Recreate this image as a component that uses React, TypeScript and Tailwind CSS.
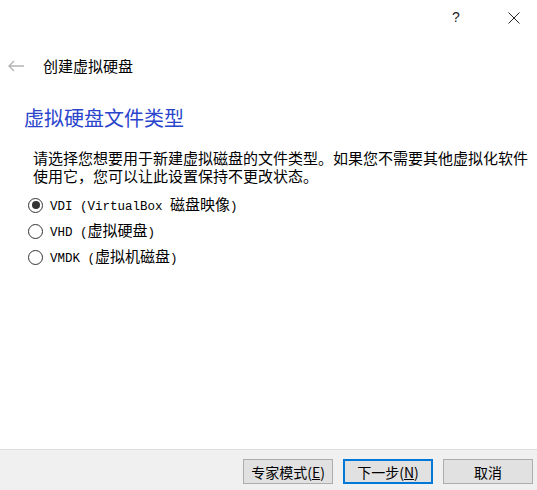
const cjk = { fontFamily: '"Noto Sans CJK SC", "Noto Sans", sans-serif' };

function Radio({ checked, children }: { checked?: boolean; children: React.ReactNode }) {
  return (
    <div className="flex h-[26px] items-center">
      <span className="ml-[28px] flex h-[15px] w-[15px] shrink-0 items-center justify-center rounded-full border border-[#333333] bg-white">
        {checked && <span className="h-[8px] w-[8px] rounded-full bg-[#333333]" />}
      </span>
      <span className="ml-[7px] block text-[15px] leading-[20px] text-black">{children}</span>
    </div>
  );
}

function Latin({ children }: { children: React.ReactNode }) {
  return (
    <span className="whitespace-pre text-[12.5px]" style={{ fontFamily: '"Liberation Mono", monospace' }}>
      {children}
    </span>
  );
}

function Btn({ children, primary }: { children: React.ReactNode; primary?: boolean }) {
  return (
    <button
      className={
        "flex h-[25px] w-[90px] items-center justify-center bg-[#e1e1e1] text-[14px] leading-none text-black " +
        (primary ? "border-2 border-[#0078d7]" : "border border-[#adadad]")
      }
    >
      {children}
    </button>
  );
}

export default function App() {
  return (
    <div className="flex h-[490px] w-full flex-col overflow-hidden bg-white" style={cjk}>
      {/* title bar */}
      <div className="flex h-[35px] items-center justify-end">
        <div className="flex w-[46px] items-center justify-center text-[14px] text-[#222]" style={{ fontFamily: '"Liberation Sans", sans-serif' }}>
          ?
        </div>
        <div className="ml-[12px] flex w-[46px] items-center justify-center">
          <svg width="12" height="12" viewBox="0 0 12 12">
            <path d="M0.5 0.5 L11.5 11.5 M11.5 0.5 L0.5 11.5" stroke="#222" strokeWidth="1" />
          </svg>
        </div>
      </div>

      {/* header */}
      <div className="mt-[19px] flex h-[24px] items-center">
        <svg className="ml-[8px]" width="16" height="12" viewBox="0 0 16 12">
          <path d="M1 6 H16 M6 1 L1 6 L6 11" stroke="#b4b4b4" strokeWidth="1.4" fill="none" />
        </svg>
        <span className="ml-[19px] text-[15px] text-black">创建虚拟硬盘</span>
      </div>

      {/* main instruction */}
      <div className="ml-[24px] mt-[26px] h-[28px] text-[20px] leading-[28px] text-[#2a45cc]">虚拟硬盘文件类型</div>

      <p className="ml-[33px] mr-[4px] mt-[17px] text-[15px] leading-[17.5px] text-black">
        请选择您想要用于新建虚拟磁盘的文件类型。如果您不需要其他虚拟化软件使用它，您可以让此设置保持不更改状态。
      </p>

      <div className="mt-[8px] flex flex-col">
        <Radio checked>
          <Latin>VDI (VirtualBox </Latin>磁盘映像<Latin>)</Latin>
        </Radio>
        <Radio>
          <Latin>VHD (</Latin>虚拟硬盘<Latin>)</Latin>
        </Radio>
        <Radio>
          <Latin>VMDK (</Latin>虚拟机磁盘<Latin>)</Latin>
        </Radio>
      </div>

      <div className="flex-1" />

      {/* footer */}
      <div className="flex h-[41px] items-start justify-end gap-[10px] border-t border-[#dfdfdf] bg-[#f0f0f0] pr-[4px] pt-[9px]">
        <Btn>
          专家模式(<u>E</u>)
        </Btn>
        <Btn primary>
          下一步(<u>N</u>)
        </Btn>
        <Btn>取消</Btn>
      </div>
    </div>
  );
}
